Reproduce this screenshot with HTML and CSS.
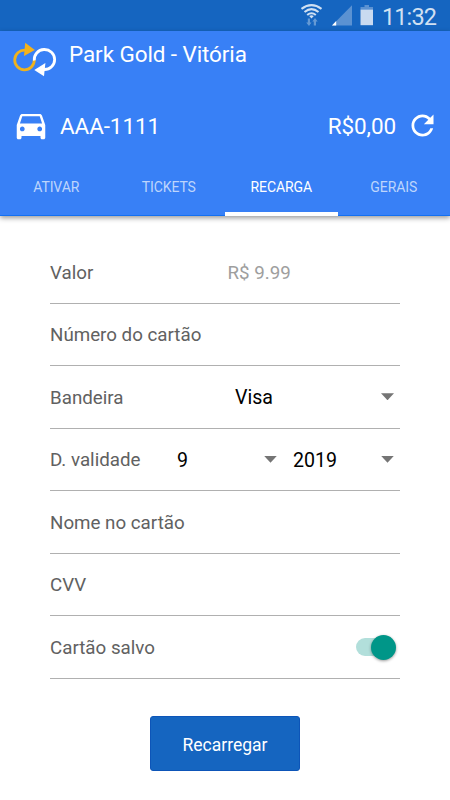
FILE: index.html
```
<!DOCTYPE html>
<html lang="pt-BR">
<head>
<meta charset="utf-8">
<title>Park Gold - Vitória</title>
<link rel="stylesheet" href="styles.css">
</head>
<body>
<div class="status">
  <svg class="status-icons" width="86" height="31" viewBox="0 0 86 31">
    <g fill="none" stroke="#d0e0f2" stroke-width="2.1">
      <path d="M1.500 8.800Q11.500 1.400 21.500 8.800"/>
      <path d="M4.500 12Q11.500 6.400 18.500 12"/>
      <path d="M7.200 15Q11.500 11.500 15.800 15"/>
    </g>
    <path d="M9.200 16Q11.500 14.400 13.800 16L11.500 18.500z" fill="#d0e0f2"/>
    <path d="M7.800 18.500h2.200v4h1.500L9 26l-2.800-3.500h1.600zM13.800 25.500h2.200v-4h1.700L15 18l-2.700 3.500h1.500z" fill="#6499d4"/>
    <path d="M32 25.500L52 5.300v20.200z" fill="#5b92d2"/>
    <path d="M32 25.500l4.200-4.500v4.500z" fill="#fff"/>
    <path d="M64.500 5h4.500v2h4v2.500H60.500V7h4z" fill="#5b92d2"/>
    <path d="M60.500 9.500H73v15.700H60.500z" fill="#c9daf0"/>
  </svg>
  <span class="clock">11:32</span>
</div>
<header class="header">
  <div class="brand">
    <svg class="logo" width="46" height="38" viewBox="0 0 46 38">
      <g fill="none" stroke-width="2.800">
        <path d="M14 9.200A9.800 9.800 0 1 0 23.300 19" stroke="#efb21c"/>
        <path d="M23.300 19.500A10.200 10 0 1 1 33 28.500" stroke="#fff"/>
      </g>
      <path d="M14.200 1.800L23.800 9 13 15z" fill="#f5b21a"/>
      <path d="M34.400 22L33 35.200 23.300 29z" fill="#fff"/>
    </svg>
    <h1 class="title">Park Gold - Vitória</h1>
  </div>
  <div class="account">
    <svg class="car" width="38" height="38" viewBox="0 0 24 24"><path fill="#fff" d="M18.920 6.010C18.720 5.420 18.160 5 17.500 5h-11c-.66 0-1.210.42-1.420 1.010L3 12v8c0 .55.45 1 1 1h1c.55 0 1-.45 1-1v-1h12v1c0 .55.45 1 1 1h1c.55 0 1-.45 1-1v-8l-2.080-5.990zM6.500 16c-.83 0-1.500-.67-1.500-1.500S5.670 13 6.500 13s1.500.67 1.500 1.500S7.330 16 6.500 16zm11 0c-.83 0-1.500-.67-1.500-1.500s.67-1.500 1.500-1.500 1.500.67 1.500 1.500-.67 1.500-1.500 1.500zM5 11l1.500-4.500h11L19 11H5z"/></svg>
    <span class="plate">AAA-1111</span>
    <span class="balance">R$0,00</span>
    <svg class="refresh" width="33" height="33" viewBox="0 0 24 24"><path fill="#fff" d="M17.650 6.350C16.200 4.900 14.210 4 12 4c-4.420 0-7.990 3.580-7.990 8s3.570 8 7.990 8c3.730 0 6.840-2.550 7.730-6h-2.080c-.82 2.330-3.040 4-5.650 4-3.310 0-6-2.690-6-6s2.690-6 6-6c1.660 0 3.140.69 4.220 1.780L13 11h7V4l-2.350 2.350z"/></svg>
  </div>
  <nav class="tabs">
    <span class="tab">ATIVAR</span>
    <span class="tab">TICKETS</span>
    <span class="tab active">RECARGA</span>
    <span class="tab">GERAIS</span>
  </nav>
</header>
<main class="form">
  <div class="row"><span class="label valor">Valor</span><span class="hint">R$ 9.99</span></div>
  <div class="row"><span class="label">Número do cartão</span></div>
  <div class="row"><span class="label bandeira">Bandeira</span><span class="value">Visa</span><i class="arrow"></i></div>
  <div class="row"><span class="label validade">D. validade</span><span class="value month">9</span><i class="arrow"></i><span class="value year">2019</span><i class="arrow"></i></div>
  <div class="row"><span class="label">Nome no cartão</span></div>
  <div class="row"><span class="label">CVV</span></div>
  <div class="row"><span class="label saved">Cartão salvo</span><span class="switch"><span class="knob"></span></span></div>
  <button class="submit">Recarregar</button>
</main>
</body>
</html>
```
FILE: styles.css
```
* { box-sizing: border-box; }
body {
  margin: 0;
  width: 450px;
  height: 800px;
  overflow: hidden;
  background: #fff;
  font-family: Roboto, sans-serif;
}
.status {
  display: flex;
  justify-content: flex-end;
  align-items: center;
  height: 31px;
  padding-right: 14px;
  background: #1565c0;
}
.status-icons { margin-right: -4px; }
.clock {
  width: 54px;
  padding-top: 3px;
  font-size: 23.500px;
  line-height: 28px;
  letter-spacing: -.9px;
  color: #d0e0f2;
  white-space: nowrap;
}
.header {
  height: 185px;
  background: #3880f6;
  border-bottom: 1px solid #1370f2;
  box-shadow: 0 2px 5px rgba(0, 0, 0, .4);
  color: #fff;
}
.brand {
  display: flex;
  height: 75px;
  padding: 10px 0 0 11px;
}
.title {
  margin: 0 0 0 12px;
  font-size: 22.500px;
  line-height: 26px;
  letter-spacing: -.1px;
  font-weight: 400;
}
.account {
  display: flex;
  align-items: center;
  height: 38px;
  padding: 0 11px 0 12px;
}
.plate { margin-left: 10px; font-size: 22.500px; padding-top: 2px; letter-spacing: -.1px; }
.balance { margin-left: auto; font-size: 22.500px; padding-top: 2px; letter-spacing: -.1px; }
.refresh { margin-left: 10px; }
.tabs {
  display: grid;
  grid-template-columns: repeat(4, 1fr);
  height: 71px;
  font-size: 14px;
}
.tab {
  padding-top: 32px;
  line-height: 22px;
  letter-spacing: -.1px;
  text-align: center;
  color: #bdd5fc;
}
.tab.active {
  height: 72px;
  color: #fff;
  border-bottom: 4px solid #fff;
}
.form {
  display: flex;
  flex-direction: column;
  padding: 25px 50px 0;
}
.row {
  display: flex;
  align-items: center;
  height: 62.500px;
  padding-top: 2px;
  border-bottom: 1px solid #b0b0b0;
  font-size: 18.750px;
  color: #616161;
}
.valor { width: 177.500px; }
.bandeira { width: 185px; }
.validade { width: 127px; }
.hint { color: #9e9e9e; padding-top: 1px; }
.value { flex: 1; color: #000; font-size: 19.600px; }
.month { flex: 0 0 87px; }
.year { margin-left: 17px; }
.arrow {
  width: 13px;
  height: 7px;
  margin-bottom: 2px;
  background: #757575;
  clip-path: polygon(0 0, 100% 0, 50% 100%);
}
.month + .arrow { margin-right: -1px; }
.value ~ .arrow:last-child { margin-right: 6px; }
.saved { flex: 1; }
.switch {
  display: flex;
  align-items: center;
  justify-content: flex-end;
  width: 39px;
  height: 18px;
  margin: 0 5px 1px 0;
  border-radius: 9px;
  background: #b2dfdb;
}
.knob {
  flex: none;
  width: 25px;
  height: 25px;
  margin-right: -1px;
  border-radius: 50%;
  background: #009688;
  box-shadow: 0 1px 3px rgba(0, 0, 0, .4);
}
.submit {
  align-self: center;
  width: 150px;
  height: 55px;
  margin-top: 37.500px;
  padding: 3px 0 0;
  border: 1px solid #0d55b8;
  border-radius: 3px;
  background: #1565c0;
  color: #fff;
  font: 17.500px Roboto, sans-serif;
}
```
